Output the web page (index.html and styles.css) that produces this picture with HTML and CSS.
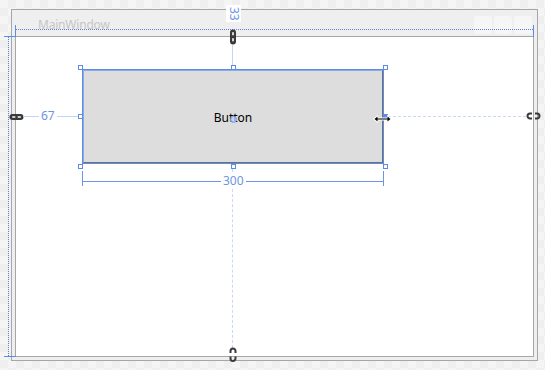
FILE: index.html
```html
<!DOCTYPE html>
<html>
<head>
<meta charset="utf-8">
<link rel="stylesheet" href="styles.css">
</head>
<body>
<div class="stage">
  <div class="window">
    <div class="titlebar">
      <span class="title">MainWindow</span>
      <div class="caption-buttons">
        <span class="cap-btn"></span><span class="cap-btn"></span><span class="cap-btn"></span>
      </div>
    </div>
    <div class="client">
      <div class="button-wrap">
        <div class="wpf-button"><span>Button</span></div>
        <span class="handle h-tl"></span>
        <span class="handle h-tm"></span>
        <span class="handle h-tr"></span>
        <span class="handle h-ml"></span>
        <span class="handle h-mr"></span>
        <span class="handle h-bl"></span>
        <span class="handle h-bm"></span>
        <span class="handle h-br"></span>
        <span class="center-dot"></span>
      </div>
    </div>
  </div>

  <!-- window size adorners -->
  <div class="adorn win-w-line"></div>
  <div class="adorn win-w-stub stub-left"></div>
  <div class="adorn win-w-stub stub-right"></div>
  <div class="adorn win-h-line"></div>
  <div class="adorn win-h-stub stub-top"></div>
  <div class="adorn win-h-stub stub-bottom"></div>

  <!-- top margin -->
  <div class="adorn label label-33">33</div>
  <svg class="adorn chain-top" width="8" height="16" viewBox="0 0 8 16">
    <rect x="1" y="0.5" width="6" height="15" rx="3" fill="#3a3a3a"/>
    <rect x="3.2" y="3" width="1.6" height="3.5" rx="0.8" fill="#fff"/>
    <rect x="3.2" y="9" width="1.6" height="3.5" rx="0.8" fill="#fff"/>
  </svg>
  <div class="adorn top-margin-line"></div>

  <!-- left margin -->
  <svg class="adorn chain-left" width="15" height="8" viewBox="0 0 15 8">
    <rect x="0.5" y="1" width="14" height="6" rx="3" fill="#3a3a3a"/>
    <rect x="3" y="3.2" width="3.5" height="1.6" rx="0.8" fill="#fff"/>
    <rect x="8.5" y="3.2" width="3.5" height="1.6" rx="0.8" fill="#fff"/>
  </svg>
  <div class="adorn left-margin-line"></div>
  <div class="adorn label label-67">67</div>

  <!-- right margin (unset) -->
  <div class="adorn right-dash"></div>
  <svg class="adorn chain-right" width="15" height="8" viewBox="0 0 15 8">
    <path d="M6 1.5 H4 A2.5 2.5 0 0 0 4 6.5 H6" fill="none" stroke="#3a3a3a" stroke-width="2"/>
    <path d="M9 1.5 H11 A2.5 2.5 0 0 1 11 6.5 H9" fill="none" stroke="#3a3a3a" stroke-width="2"/>
  </svg>

  <!-- bottom margin (unset) -->
  <div class="adorn bottom-dash"></div>
  <svg class="adorn chain-bottom" width="8" height="16" viewBox="0 0 8 16">
    <path d="M1.5 6 V4 A2.5 2.5 0 0 1 6.5 4 V6" fill="none" stroke="#3a3a3a" stroke-width="2"/>
    <path d="M1.5 9.5 V11.5 A2.5 2.5 0 0 0 6.5 11.5 V9.5" fill="none" stroke="#3a3a3a" stroke-width="2"/>
  </svg>

  <!-- width dimension -->
  <div class="adorn dim-line"></div>
  <div class="adorn dim-tick tick-left"></div>
  <div class="adorn dim-tick tick-right"></div>
  <div class="adorn label label-300">300</div>

  <!-- resize cursor -->
  <svg class="adorn cursor" width="21" height="10" viewBox="0 0 21 10">
    <path d="M1 5 L6 0.8 V3.5 H15 V0.8 L20 5 L15 9.2 V6.5 H6 V9.2 Z" fill="#fff"/>
    <path d="M2.5 5 L5.5 2.5 V4.5 H15.5 V2.5 L18.5 5 L15.5 7.5 V5.5 H5.5 V7.5 Z" fill="#000"/>
  </svg>
</div>
</body>
</html>
```

FILE: styles.css
```css
html, body {
  margin: 0;
  padding: 0;
}

body {
  width: 545px;
  height: 370px;
  overflow: hidden;
  font-family: "Noto Sans", "Open Sans", sans-serif;
}

.stage {
  position: relative;
  width: 545px;
  height: 370px;
  padding: 9px 0 0 11px;
  box-sizing: border-box;
  background-color: #f5f5f5;
  background-image:
    linear-gradient(45deg, #efefef 25%, transparent 25%, transparent 75%, #efefef 75%),
    linear-gradient(45deg, #efefef 25%, transparent 25%, transparent 75%, #efefef 75%);
  background-size: 16px 16px;
  background-position: 0 0, 8px 8px;
}

.window {
  width: 527px;
  height: 352px;
  box-sizing: border-box;
  border: 1px solid #a6a6a6;
  background: #efefef;
  display: flex;
  flex-direction: column;
  padding: 0 3px 3px 3px;
}

.titlebar {
  height: 26px;
  flex: none;
  display: flex;
  align-items: flex-start;
  justify-content: space-between;
}

.title {
  margin: 7px 0 0 23px;
  font-size: 12px;
  line-height: 16px;
  color: #c6c6c6;
  letter-spacing: -0.2px;
}

.caption-buttons {
  display: flex;
  gap: 2px;
  margin: 6px 2px 0 0;
}

.cap-btn {
  width: 18px;
  height: 18px;
  border-radius: 3px;
  background: #f6f6f6;
}

.client {
  flex: 1;
  border: 1px solid #a6a6a6;
  background: #ffffff;
}

.button-wrap {
  position: relative;
  width: 300px;
  height: 93px;
  margin: 33px 0 0 67px;
}

.wpf-button {
  width: 100%;
  height: 100%;
  box-sizing: border-box;
  border: 1px solid #707070;
  border-top-color: #8ea9e4;
  border-left-color: #8ea9e4;
  outline: 1px solid #5b8de6;
  background: #dddddd;
  display: flex;
  align-items: center;
  justify-content: center;
  font-size: 12px;
  color: #000;
}

.wpf-button span {
  margin-top: 1px;
}

.handle {
  position: absolute;
  width: 5px;
  height: 5px;
  box-sizing: border-box;
  border: 1px solid #5b8de6;
  background: #fff;
}

.h-tl { left: -5px; top: -5px; }
.h-tm { left: 148px; top: -5px; }
.h-tr { left: 300px; top: -5px; }
.h-ml { left: -5px; top: 44px; }
.h-mr { left: 300px; top: 44px; background: #5b8de6; }
.h-bl { left: -5px; top: 94px; }
.h-bm { left: 148px; top: 94px; }
.h-br { left: 300px; top: 94px; }

.center-dot {
  position: absolute;
  left: 147px;
  top: 46px;
  width: 5px;
  height: 5px;
  border-radius: 50%;
  border: 1px solid #7c9ef0;
  background: rgba(190, 210, 255, 0.7);
}

/* adorners */
.adorn {
  position: absolute;
  display: block;
}

.win-w-line {
  left: 16px;
  top: 29px;
  width: 517px;
  border-top: 1px dotted #5a7fd6;
}

.win-w-stub {
  top: 25px;
  width: 1px;
  height: 12px;
  background: #5b8de6;
}
.stub-left { left: 15px; }
.stub-right { left: 533px; }

.win-h-line {
  left: 8px;
  top: 37px;
  height: 319px;
  border-left: 1px dotted #5a7fd6;
}

.win-h-stub {
  left: 4px;
  width: 12px;
  height: 1px;
  background: #5b8de6;
}
.stub-top { top: 36px; }
.stub-bottom { top: 356px; }

.label {
  background: #fff;
  color: #6f93e6;
  font-size: 12px;
  line-height: 14px;
}

.label-33 {
  left: 226px;
  top: 5px;
  width: 15px;
  height: 17px;
  writing-mode: vertical-rl;
  display: flex;
  align-items: center;
  justify-content: center;
}

.chain-top { left: 229px; top: 29px; }
.chain-left { left: 9px; top: 113px; }
.chain-right { left: 526px; top: 112px; }
.chain-bottom { left: 229px; top: 347px; }

.top-margin-line {
  left: 232px;
  top: 45px;
  width: 1px;
  height: 20px;
  background: #c4d4f6;
}

.left-margin-line {
  left: 23px;
  top: 116px;
  width: 55px;
  height: 1px;
  background: #c4d4f6;
}

.label-67 {
  left: 39px;
  top: 109px;
  padding: 0 2px;
  height: 15px;
}

.right-dash {
  left: 388px;
  top: 116px;
  width: 138px;
  border-top: 1px dashed #c9d8f7;
}

.bottom-dash {
  left: 232px;
  top: 169px;
  height: 179px;
  border-left: 1px dashed #c9d8f7;
}

.dim-line {
  left: 82px;
  top: 181px;
  width: 302px;
  height: 1px;
  background: #6f93e6;
}

.dim-tick {
  top: 171px;
  width: 1px;
  height: 15px;
  background: #6f93e6;
}
.tick-left { left: 82px; }
.tick-right { left: 383px; }

.label-300 {
  left: 221px;
  top: 174px;
  padding: 0 2px;
  height: 15px;
}

.cursor {
  left: 372px;
  top: 114px;
}
```
